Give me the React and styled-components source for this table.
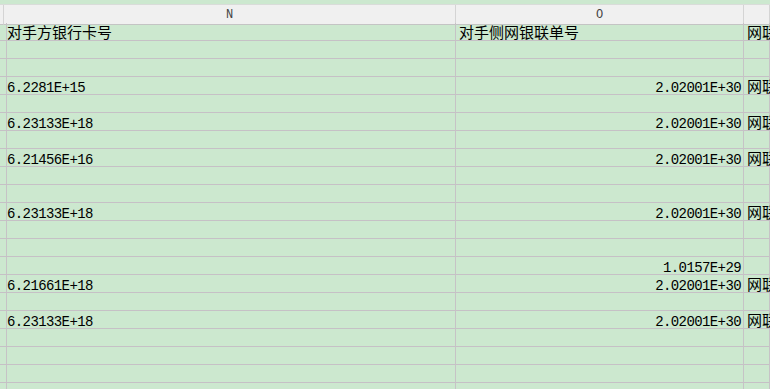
import React from 'react'
import styled, { createGlobalStyle } from 'styled-components'

const GlobalStyle = createGlobalStyle`
    html, body {
        margin: 0;
        padding: 0;
        background-color: #cce8cf;
        overflow: hidden;
    }
`

const rows = [
    ['对手方银行卡号', '对手侧网银联单号', '网联清算有限公司'],
    ['', '', ''],
    ['', '', ''],
    ['6.2281E+15', '2.02001E+30', '网联清算有限公司'],
    ['', '', ''],
    ['6.23133E+18', '2.02001E+30', '网联清算有限公司'],
    ['', '', ''],
    ['6.21456E+16', '2.02001E+30', '网联清算有限公司'],
    ['', '', ''],
    ['', '', ''],
    ['6.23133E+18', '2.02001E+30', '网联清算有限公司'],
    ['', '', ''],
    ['', '', ''],
    ['', '1.0157E+29', ''],
    ['6.21661E+18', '2.02001E+30', '网联清算有限公司'],
    ['', '', ''],
    ['6.23133E+18', '2.02001E+30', '网联清算有限公司'],
    ['', '', ''],
    ['', '', ''],
    ['', '', ''],
    ['', '', ''],
]

const rightAligned = [false, true, false]

const isNumber = (v) => /^[\d.]+E\+\d+$/.test(v)

function App() {
    return (
        <>
            <GlobalStyle />
            <SheetStyled>
                <div className="top-strip" />
                <div className="grid">
                    <HeaderCell />
                    <HeaderCell>N</HeaderCell>
                    <HeaderCell>O</HeaderCell>
                    <HeaderCell />
                    {
                        rows.map((r, i) => (
                            <React.Fragment key={i}>
                                <Cell />
                                {
                                    r.map((v, j) => (
                                        <Cell
                                            key={j}
                                            $num={isNumber(v)}
                                            $right={rightAligned[j] && isNumber(v)}
                                        >
                                            {v}
                                        </Cell>
                                    ))
                                }
                            </React.Fragment>
                        ))
                    }
                </div>
            </SheetStyled>
        </>
    )
}

const SheetStyled = styled.div`
    width: 770px;
    height: 389px;
    overflow: hidden;
    background-color: #cce8cf;
    .top-strip{
        height: 4px;
        background-color: #cce8cf;
        border-bottom: 1px solid #d9dcd9;
    }
    .grid{
        display: grid;
        grid-template-columns: 4px 452px 288px 1fr;
        grid-auto-rows: 18px;
    }
`

const HeaderCell = styled.div`
    height: 20px;
    box-sizing: border-box;
    background-color: #f0f0f0;
    border-right: 1px solid #d4d4d4;
    border-bottom: 1px solid #c4c4c4;
    display: flex;
    align-items: center;
    justify-content: center;
    font-family: "Liberation Mono", monospace;
    font-size: 12px;
    color: #444;
    &:last-child{
        border-right: none;
    }
`

const Cell = styled.div`
    box-sizing: border-box;
    height: 18px;
    min-width: 0;
    border-right: 1px solid #c6c3c6;
    border-bottom: 1px solid #c6c0c6;
    white-space: nowrap;
    display: flex;
    align-items: flex-end;
    justify-content: ${p => p.$right ? 'flex-end' : 'flex-start'};
    padding: 0 ${p => p.$right ? '2px' : '3px'} 0 3px;
    color: #000;
    font-family: ${p => p.$num ? '"Liberation Mono", monospace' : '"Noto Sans CJK SC", sans-serif'};
    font-size: ${p => p.$num ? '14px' : '15px'};
    letter-spacing: ${p => p.$num ? '-0.6px' : '0'};
    line-height: ${p => p.$num ? '12px' : '17px'};
`

export default App
